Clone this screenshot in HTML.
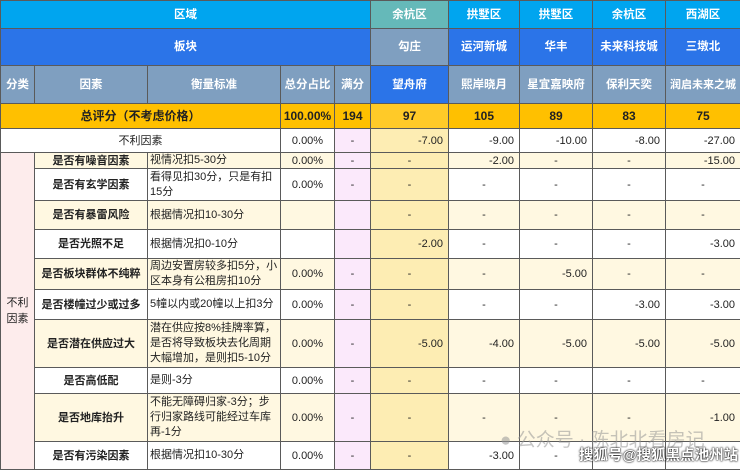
<!DOCTYPE html>
<html><head><meta charset="utf-8"><style>
*{margin:0;padding:0;box-sizing:border-box}
body{width:740px;height:467px;overflow:hidden;background:#fff;font-family:"Liberation Sans","Noto Sans CJK SC",sans-serif;font-size:11px;color:#222;position:relative}
table{border-collapse:collapse;table-layout:fixed;width:740px}
td{border:1px solid #5a5a5a;text-align:center;vertical-align:middle;overflow:hidden;white-space:nowrap;line-height:14px}
.h{color:#fff;font-weight:bold;font-size:11.5px}
.a{background:#00a5ef}.b{background:#2b74e8}.g{background:#7f9fc0}.t{background:#65b9b9}
.y{background:#ffc000;font-weight:bold;font-size:12px}
.ly{background:#fff8e1}.w{background:#fff}
.pk{background:#fbe9fb}.pr{background:#fdecec}.dy{background:#fdedb3}
.f{font-weight:bold}
.l{text-align:left;padding-left:2px;white-space:normal;line-height:15px}
.r{text-align:right;padding-right:5px}
.wm{position:absolute;left:500px;top:425px;font-size:19px;color:rgba(150,150,150,.55);white-space:nowrap}
.wm2{position:absolute;left:579px;top:444px;font-size:14.5px;color:#fff;font-weight:bold;text-shadow:0 0 2px #000,0 0 1px #000;white-space:nowrap}
</style></head><body>
<table>
<colgroup><col style="width:34px"><col style="width:113px"><col style="width:133px"><col style="width:54px"><col style="width:36px"><col style="width:78px"><col style="width:71px"><col style="width:73px"><col style="width:73px"><col style="width:75px"></colgroup>
<tr style="height:28px"><td class="a h" colspan="5">区域</td><td class="t h">余杭区</td><td class="a h">拱墅区</td><td class="a h">拱墅区</td><td class="a h">余杭区</td><td class="a h">西湖区</td></tr>
<tr style="height:37px"><td class="b h" colspan="5">板块</td><td class="g h">勾庄</td><td class="b h">运河新城</td><td class="b h">华丰</td><td class="b h">未来科技城</td><td class="b h">三墩北</td></tr>
<tr style="height:38px"><td class="g h">分类</td><td class="g h">因素</td><td class="g h">衡量标准</td><td class="g h">总分占比</td><td class="g h">满分</td><td class="b h">望舟府</td><td class="g h">熙岸晓月</td><td class="g h">星宜嘉映府</td><td class="g h">保利天奕</td><td class="g h" style="font-size:11px">润启未来之城</td></tr>
<tr style="height:25px"><td class="y" colspan="3">总评分（不考虑价格）</td><td class="y">100.00%</td><td class="y">194</td><td class="y" style="background:#ffca28">97</td><td class="y">105</td><td class="y">89</td><td class="y">83</td><td class="y">75</td></tr>
<tr style="height:24px"><td class="w" colspan="3">不利因素</td><td class="w">0.00%</td><td class="pk">-</td><td class="dy r">-7.00</td><td class="w r">-9.00</td><td class="w r">-10.00</td><td class="w r">-8.00</td><td class="w r">-27.00</td></tr>
<tr style="height:16px"><td class="pr" rowspan="10" style="white-space:normal;line-height:16px">不利<br>因素</td><td class="ly f">是否有噪音因素</td><td class="ly l">视情况扣5-30分</td><td class="ly">0.00%</td><td class="pk">-</td><td class="dy">-</td><td class="ly r">-2.00</td><td class="ly">-</td><td class="ly">-</td><td class="ly r">-15.00</td></tr>
<tr style="height:32px"><td class="w f">是否有玄学因素</td><td class="w l">看得见扣30分，只是有扣15分</td><td class="w">0.00%</td><td class="pk">-</td><td class="dy">-</td><td class="w">-</td><td class="w">-</td><td class="w">-</td><td class="w">-</td></tr>
<tr style="height:29px"><td class="ly f">是否有暴雷风险</td><td class="ly l">根据情况扣10-30分</td><td class="ly"></td><td class="pk"></td><td class="dy">-</td><td class="ly">-</td><td class="ly">-</td><td class="ly">-</td><td class="ly">-</td></tr>
<tr style="height:29px"><td class="w f">是否光照不足</td><td class="w l">根据情况扣0-10分</td><td class="w"></td><td class="pk"></td><td class="dy r">-2.00</td><td class="w">-</td><td class="w">-</td><td class="w">-</td><td class="w r">-3.00</td></tr>
<tr style="height:29px"><td class="ly f">是否板块群体不纯粹</td><td class="ly l">周边安置房较多扣5分，小区本身有公租房扣10分</td><td class="ly">0.00%</td><td class="pk">-</td><td class="dy">-</td><td class="ly">-</td><td class="ly r">-5.00</td><td class="ly">-</td><td class="ly">-</td></tr>
<tr style="height:30px"><td class="w f">是否楼幢过少或过多</td><td class="w l">5幢以内或20幢以上扣3分</td><td class="w">0.00%</td><td class="pk">-</td><td class="dy">-</td><td class="w">-</td><td class="w">-</td><td class="w r">-3.00</td><td class="w r">-3.00</td></tr>
<tr style="height:48px"><td class="ly f">是否潜在供应过大</td><td class="ly l">潜在供应按8%挂牌率算，是否将导致板块去化周期大幅增加，是则扣5-10分</td><td class="ly">0.00%</td><td class="pk">-</td><td class="dy r">-5.00</td><td class="ly r">-4.00</td><td class="ly r">-5.00</td><td class="ly r">-5.00</td><td class="ly r">-5.00</td></tr>
<tr style="height:26px"><td class="w f">是否高低配</td><td class="w l">是则-3分</td><td class="w">0.00%</td><td class="pk">-</td><td class="dy">-</td><td class="w">-</td><td class="w">-</td><td class="w">-</td><td class="w">-</td></tr>
<tr style="height:48px"><td class="ly f">是否地库抬升</td><td class="ly l">不能无障碍归家-3分；步行归家路线可能经过车库再-1分</td><td class="ly">0.00%</td><td class="pk">-</td><td class="dy">-</td><td class="ly">-</td><td class="ly">-</td><td class="ly">-</td><td class="ly r">-1.00</td></tr>
<tr style="height:28px"><td class="w f">是否有污染因素</td><td class="w l">根据情况扣10-30分</td><td class="w">0.00%</td><td class="pk">-</td><td class="dy">-</td><td class="w r">-3.00</td><td class="w">-</td><td class="w"></td><td class="w"></td></tr>
</table>
<div class="wm">● 公众号 · 陈北北看房记</div>
<div class="wm2">搜狐号@搜狐黑点池州站</div>
</body></html>
